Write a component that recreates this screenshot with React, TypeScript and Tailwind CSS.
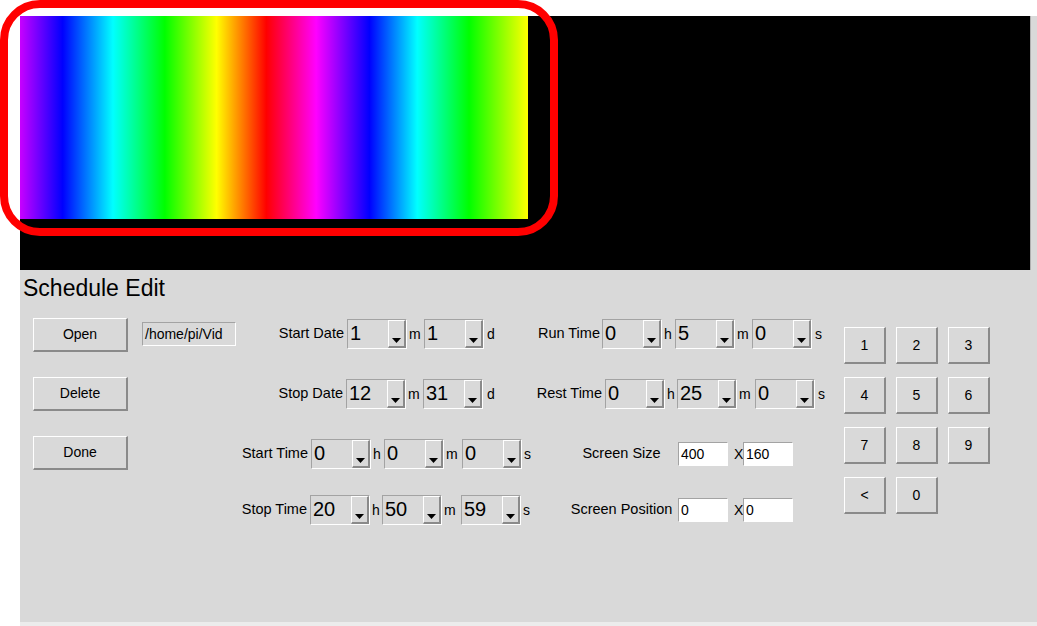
import React from 'react';

const FONT = { fontFamily: '"Liberation Sans", Arial, sans-serif' };

function TkButton({ label, className = '' }: { label: string; className?: string }) {
  return (
    <div
      className={`flex items-center justify-center bg-[#d9d9d9] border-t border-l border-t-white border-l-white border-b-2 border-r-2 border-b-[#8a8a8a] border-r-[#8a8a8a] text-[14px] text-black ${className}`}
    >
      {label}
    </div>
  );
}

function Combo({ value }: { value: string }) {
  return (
    <div className="flex h-[30px] w-[60px] shrink-0 border-t border-l border-t-[#a3a3a3] border-l-[#a3a3a3] border-b border-r border-b-white border-r-white bg-[#d9d9d9]">
      <div className="flex-1 pl-[2px] text-[20px] leading-[27px] text-black">{value}</div>
      {/* arrow button */}
      <div className="relative w-[18px] border-l border-t border-l-white border-t-white border-r-2 border-b-2 border-r-[#8a8a8a] border-b-[#8a8a8a]">
        <svg className="absolute left-[3px] bottom-[3px]" width="9" height="5" viewBox="0 0 9 5">
          <path d="M0 0 H9 L4.5 5 Z" fill="#000" />
        </svg>
      </div>
    </div>
  );
}

function Entry({ value, w = 'w-[50px]', bg = 'bg-white' }: { value: string; w?: string; bg?: string }) {
  return (
    <div
      className={`h-[24px] ${w} shrink-0 ${bg} border-t border-l border-t-[#a3a3a3] border-l-[#a3a3a3] border-b border-r border-b-white border-r-white pl-[2px] text-[14px] leading-[22px] text-black overflow-hidden whitespace-nowrap`}
    >
      {value}
    </div>
  );
}

function Unit({ t, w, pl = 'pl-[2px]' }: { t: string; w: string; pl?: string }) {
  return <div className={`${w} ${pl} shrink-0 text-[14px] text-black`}>{t}</div>;
}

function Label({ t, w, align = 'text-right' }: { t: string; w: string; align?: string }) {
  return <div className={`${w} ${align} shrink-0 whitespace-nowrap text-[14.5px] text-black`}>{t}</div>;
}

export default function App() {
  const keys = ['1', '2', '3', '4', '5', '6', '7', '8', '9', '<', '0'];

  return (
    <div className="min-h-screen w-[1037px] bg-white" style={FONT}>
      <div className="relative ml-[20px] pt-[16px]">
        <div className="h-[606px] w-[1017px] bg-[#d9d9d9] border-b-4 border-b-[#ececec] box-content">
          {/* Video preview */}
          <div className="h-[254px] w-[1011px] bg-black border-r border-r-[#b0b0b0]">
            <div className="h-[203px] w-[508px] bg-[linear-gradient(to_right,#c800ff_0%,#0000ff_8.4%,#00ffff_18.3%,#00ff00_28.5%,#ffff00_38.7%,#ff0000_48.5%,#ff00ff_58.3%,#0000ff_68.8%,#00ffff_78.2%,#00ff00_88.4%,#ffff00_100%)]" />
          </div>

          {/* Title */}
          <div className="mt-[5px] pl-[3px] text-[23px] leading-[27px] text-black">Schedule Edit</div>

          {/* Controls */}
          <div className="flex pl-[13px]">
            <div className="flex w-[95px] flex-col gap-[25px] pt-[16px]">
              <TkButton label="Open" className="h-[34px]" />
              <TkButton label="Delete" className="h-[34px]" />
              <TkButton label="Done" className="h-[34px]" />
            </div>

            <div className="ml-[14px] flex w-[702px] flex-col pt-[17px]">
              {/* Row 1 */}
              <div className="flex h-[30px] items-center">
                <Entry value="/home/pi/Vid" w="w-[94px]" bg="bg-[#d9d9d9]" />
                <Label t="Start Date" w="w-[108px]" />
                <div className="ml-[3px]"><Combo value="1" /></div>
                <Unit t="m" w="w-[17px]" />
                <Combo value="1" />
                <Unit t="d" w="w-[20px]" pl="pl-[3px]" />
                <Label t="Run Time" w="w-[96px]" />
                <div className="ml-[2px]"><Combo value="0" /></div>
                <Unit t="h" w="w-[13px]" />
                <Combo value="5" />
                <Unit t="m" w="w-[17px]" />
                <Combo value="0" />
                <Unit t="s" w="w-[20px]" pl="pl-[3px]" />
              </div>

              {/* Row 2 */}
              <div className="mt-[30px] flex h-[30px] items-center">
                <div className="w-[94px] shrink-0" />
                <Label t="Stop Date" w="w-[107px]" />
                <div className="ml-[3px]"><Combo value="12" /></div>
                <Unit t="m" w="w-[17px]" />
                <Combo value="31" />
                <Unit t="d" w="w-[20px]" pl="pl-[4px]" />
                <Label t="Rest Time" w="w-[99px]" />
                <div className="ml-[3px]"><Combo value="0" /></div>
                <Unit t="h" w="w-[12px]" />
                <Combo value="25" />
                <Unit t="m" w="w-[18px]" />
                <Combo value="0" />
                <Unit t="s" w="w-[20px]" pl="pl-[3px]" />
              </div>

              {/* Row 3 */}
              <div className="mt-[30px] flex h-[30px] items-center">
                <Label t="Start Time" w="w-[166px]" />
                <div className="ml-[3px]"><Combo value="0" /></div>
                <Unit t="h" w="w-[13px]" />
                <Combo value="0" />
                <Unit t="m" w="w-[18px]" />
                <Combo value="0" />
                <Unit t="s" w="w-[43px]" />
                <Label t="Screen Size" w="w-[113px]" align="text-center" />
                <Entry value="400" />
                <Unit t="X" w="w-[15px]" pl="pl-[6px]" />
                <Entry value="160" />
              </div>

              {/* Row 4 */}
              <div className="mt-[26px] flex h-[30px] items-center">
                <Label t="Stop Time" w="w-[165px]" />
                <div className="ml-[3px]"><Combo value="20" /></div>
                <Unit t="h" w="w-[12px]" />
                <Combo value="50" />
                <Unit t="m" w="w-[19px]" />
                <Combo value="59" />
                <Unit t="s" w="w-[44px]" />
                <Label t="Screen Position" w="w-[113px]" align="text-center" />
                <Entry value="0" />
                <Unit t="X" w="w-[15px]" pl="pl-[6px]" />
                <Entry value="0" />
              </div>
            </div>

            {/* Keypad */}
            <div className="grid h-fit grid-cols-[42px_42px_42px] gap-x-[10px] gap-y-[13px] pt-[25px]">
              {keys.map((k) => (
                <TkButton key={k} label={k} className="h-[37px]" />
              ))}
            </div>
          </div>
        </div>
      </div>

      {/* Annotation highlight */}
      <div className="absolute left-0 top-0 h-[236px] w-[558px] rounded-[40px] border-[8px] border-[#ff0000]" />
    </div>
  );
}
